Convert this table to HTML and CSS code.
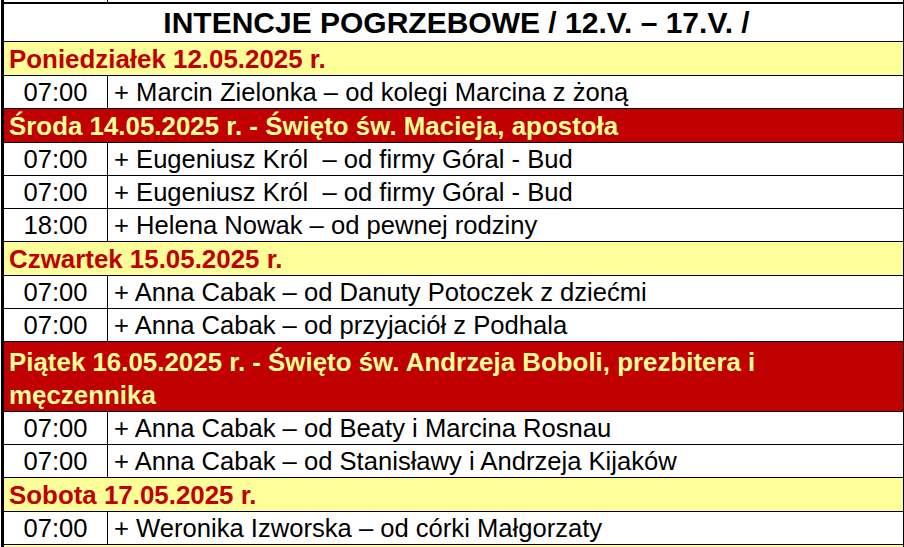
FILE: index.html
```html
<!DOCTYPE html>
<html lang="pl">
<head>
<meta charset="utf-8">
<title>Intencje pogrzebowe</title>
<link rel="stylesheet" href="styles.css">
</head>
<body>
<div class="sheet">
  <div class="row prev"><div class="time"></div><div class="desc"></div></div>
  <div class="row title">INTENCJE POGRZEBOWE / 12.V. – 17.V. /</div>
  <div class="row day yellow">Poniedziałek 12.05.2025 r.</div>
  <div class="row data"><div class="time">07:00</div><div class="desc">+ Marcin Zielonka – od kolegi Marcina z żoną</div></div>
  <div class="row day red">Środa 14.05.2025 r. - Święto św. Macieja, apostoła</div>
  <div class="row data"><div class="time">07:00</div><div class="desc">+ Eugeniusz Król&nbsp; – od firmy Góral - Bud</div></div>
  <div class="row data"><div class="time">07:00</div><div class="desc">+ Eugeniusz Król&nbsp; – od firmy Góral - Bud</div></div>
  <div class="row data"><div class="time">18:00</div><div class="desc">+ Helena Nowak – od pewnej rodziny</div></div>
  <div class="row day yellow">Czwartek 15.05.2025 r.</div>
  <div class="row data"><div class="time">07:00</div><div class="desc">+ Anna Cabak – od Danuty Potoczek z dziećmi</div></div>
  <div class="row data"><div class="time">07:00</div><div class="desc">+ Anna Cabak – od przyjaciół z Podhala</div></div>
  <div class="row day red double"><span class="wrap">Piątek 16.05.2025 r. - Święto św. Andrzeja Boboli, prezbitera i męczennika</span></div>
  <div class="row data"><div class="time">07:00</div><div class="desc">+ Anna Cabak – od Beaty i Marcina Rosnau</div></div>
  <div class="row data"><div class="time">07:00</div><div class="desc">+ Anna Cabak – od Stanisławy i Andrzeja Kijaków</div></div>
  <div class="row day yellow">Sobota 17.05.2025 r.</div>
  <div class="row data"><div class="time">07:00</div><div class="desc">+ Weronika Izworska – od córki Małgorzaty</div></div>
  <div class="row day yellow"></div>
</div>
</body>
</html>
```
FILE: styles.css
```css
html, body {
  margin: 0;
  padding: 0;
  background: #ffffff;
}
body {
  width: 904px;
  height: 547px;
  overflow: hidden;
  font-family: "Liberation Sans", Arial, sans-serif;
  color: #000000;
}
.sheet {
  margin-left: 1px;
  width: 899px;
  border-left: 3px solid #000000;
  border-right: 1px solid #000000;
}
.row {
  display: flex;
  border-bottom: 1px solid #000000;
  box-sizing: border-box;
}
.prev {
  height: 2px;
  border-bottom: none;
}
.prev .time {
  height: 2px;
}
.title {
  border-top: 2px solid #000000;
  height: 40px;
  align-items: center;
  justify-content: center;
  font-weight: bold;
  font-size: 30px;
  padding-left: 6px;
}
.time {
  width: 103px;
  flex: none;
  border-right: 1px solid #000000;
  display: flex;
  align-items: center;
  justify-content: center;
}
.desc {
  flex: 1;
  padding-left: 6px;
  display: flex;
  align-items: center;
  white-space: nowrap;
}
.data {
  height: 33px;
  font-size: 25.6px;
  align-items: stretch;
}
.data .time, .data .desc {
  padding-top: 1px;
}
.day {
  height: 34px;
  font-weight: bold;
  font-size: 25.9px;
  align-items: center;
  padding-left: 5px;
  padding-top: 1px;
}
.yellow {
  background: #ffff99;
  color: #c00000;
}
.red {
  background: #c00000;
  color: #ffff99;
}
.double {
  height: 70px;
  line-height: 33px;
  padding-top: 4px;
  padding-right: 130px;
}
```
